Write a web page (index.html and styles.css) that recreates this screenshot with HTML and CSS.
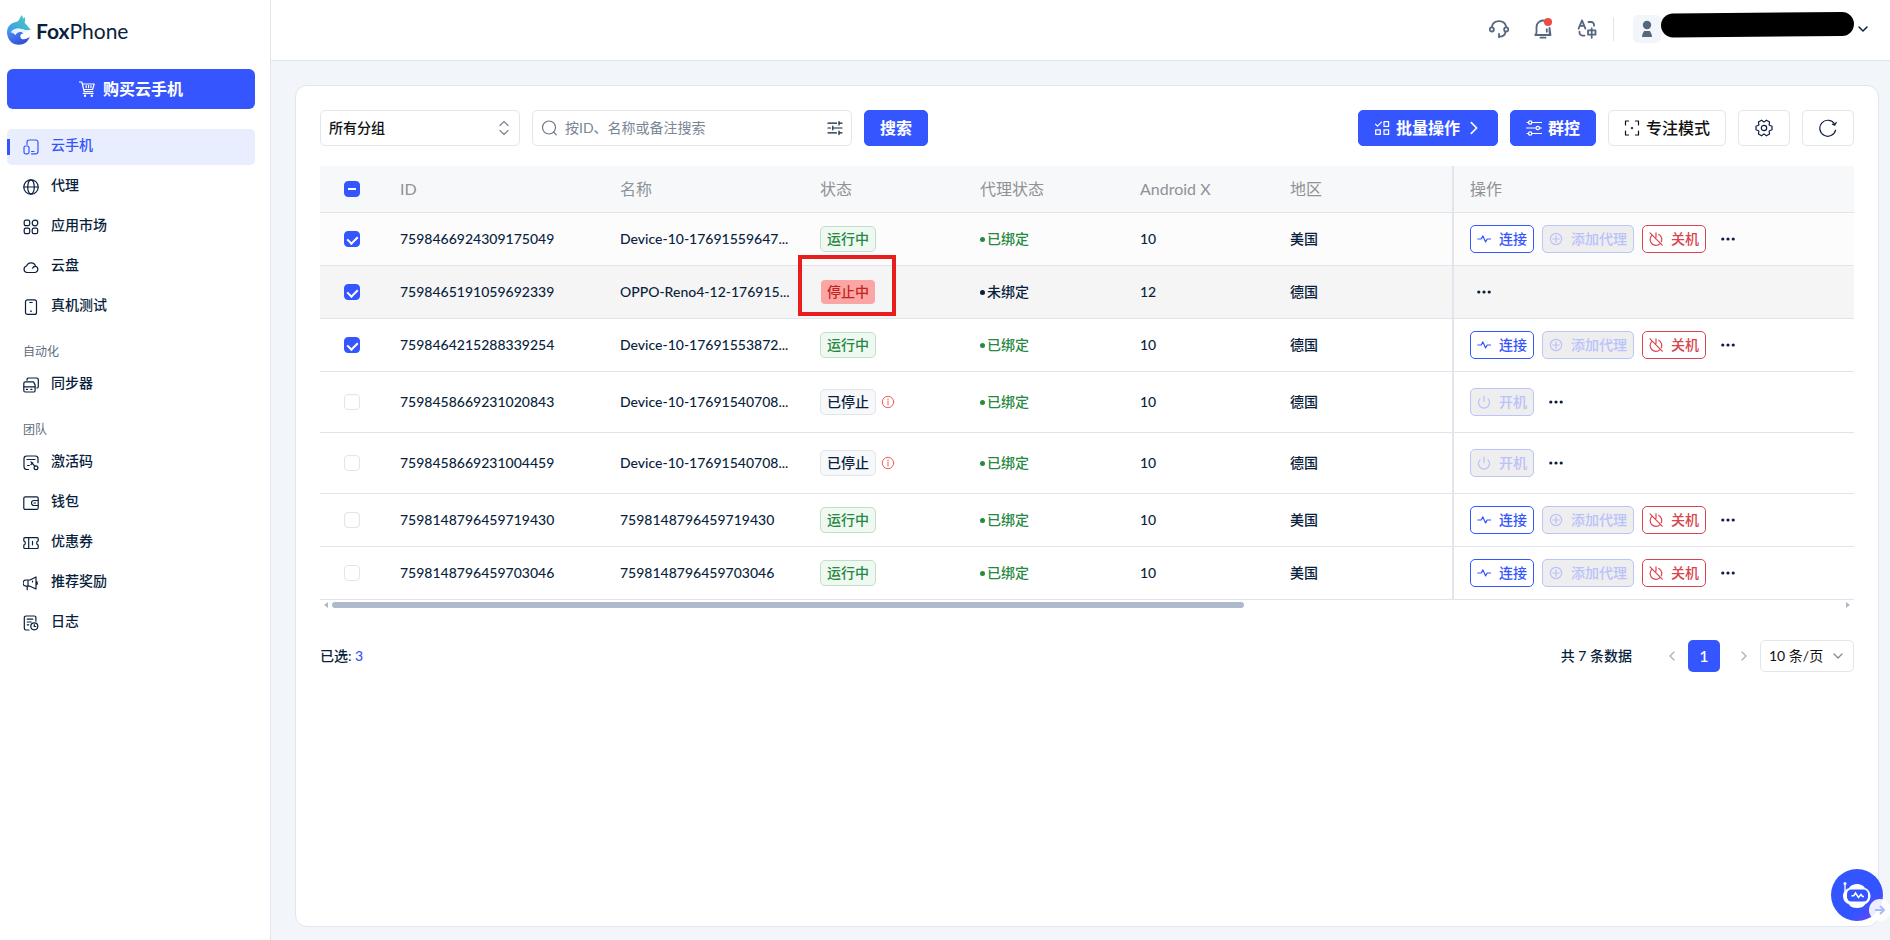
FILE: index.html
```html
<!DOCTYPE html>
<html lang="zh-CN">
<head>
    <meta charset="UTF-8">
    <meta name="viewport" content="width=device-width, initial-scale=1.0">
    <title>FoxPhone</title>
    <link rel="stylesheet" href="styles.css">
</head>
<body>
    <!-- Icon sprite -->
    <svg class="sprite" xmlns="http://www.w3.org/2000/svg">
        <symbol id="i-cart" viewBox="0 0 16 16"><path d="M.5 1h2.3l2.4 9.500h8.600M3.300 3h11.900l-1.600 5.500H4.800M4.200 12.300h10M7.200 4.500v2.200M9.600 4.500v2.200M12 4.500v2.200"/><circle cx="6" cy="14.700" r=".6"/><circle cx="12.800" cy="14.700" r=".6"/></symbol>
        <symbol id="i-phone" viewBox="0 0 16 16"><path d="M4 5.500V3.200A2.200 2.200 0 0 1 6.200 1h6.600A2.200 2.200 0 0 1 15 3.200v9.400a2.200 2.200 0 0 1-2.200 2.200H8.500M8.500 12.500H11"/><rect x="1" y="7" width="5" height="7.800" rx="1.500"/></symbol>
        <symbol id="i-globe" viewBox="0 0 16 16"><circle cx="8" cy="8" r="7.200"/><ellipse cx="8" cy="8" rx="3.300" ry="7.200"/><path d="M.8 8h14.400"/></symbol>
        <symbol id="i-apps" viewBox="0 0 16 16"><rect x="1.200" y="1.200" width="5.500" height="5.500" rx="1.600"/><circle cx="12" cy="4" r="2.800"/><rect x="1.200" y="9.200" width="5.500" height="5.500" rx="1.600"/><rect x="9.200" y="9.200" width="5.500" height="5.500" rx="1.600"/></symbol>
        <symbol id="i-cloud" viewBox="0 0 16 16"><path d="M4 13.500a3.300 3.300 0 0 1-.4-6.500A4.700 4.700 0 0 1 12.600 7.300a3.200 3.200 0 0 1-.4 6.200zM12.600 7.300c-1.300-.1-2.500.6-3 1.900"/></symbol>
        <symbol id="i-device" viewBox="0 0 16 16"><rect x="2.500" y=".8" width="11" height="14.600" rx="2"/><path d="M6.800 3.500h2.400M7.600 12.200h.8"/></symbol>
        <symbol id="i-sync" viewBox="0 0 16 16"><path d="M4 3.200V2.600A1.500 1.500 0 0 1 5.500 1h8a1.700 1.700 0 0 1 1.800 1.700v6.800a1.500 1.500 0 0 1-1.500 1.500M.9 9.800h11"/><path d="M2.300 4.900h8.200l1.600 3v5.600a1.500 1.500 0 0 1-1.500 1.500H2.300A1.500 1.500 0 0 1 .8 13.500V6.400a1.500 1.500 0 0 1 1.500-1.500zM3.300 12.300h1.200M7.800 12.300H9"/></symbol>
        <symbol id="i-code" viewBox="0 0 16 16"><path d="M5.500 14.500H3.700A2.700 2.700 0 0 1 1 11.800V3.700A2.700 2.700 0 0 1 3.700 1h8.600A2.700 2.700 0 0 1 15 3.700v4M4 4.500h8M4.500 10.500h1.800M8 6.800l4 4.600M8 9.500l1.800-1.700"/><circle cx="13" cy="12.700" r="1.900"/></symbol>
        <symbol id="i-wallet" viewBox="0 0 16 16"><rect x=".8" y="1.800" width="14.400" height="12.600" rx="1.500"/><path d="M15 5.500h-4a2.500 2.500 0 0 0 0 5h4M11 8h1.500"/></symbol>
        <symbol id="i-coupon" viewBox="0 0 16 16"><path d="M1.800 2.700h12.400a1 1 0 0 1 1 1v2.200a2.200 2.200 0 0 0 0 4.200v2.400a1 1 0 0 1-1 1H1.800a1 1 0 0 1-1-1v-2.400a2.200 2.200 0 0 0 0-4.200V3.700a1 1 0 0 1 1-1zM5.700 2.700v10.800M9.500 6.300v3.500"/></symbol>
        <symbol id="i-horn" viewBox="0 0 16 16"><path d="M5 5h2l6-3v12l-6-2.800H5M5 5H3.200a3.100 3.100 0 0 0 0 6.200H5zM13 6.400a1.800 1.800 0 0 1 0 3.500M4.200 11.500v3.200M9.500 6v1"/></symbol>
        <symbol id="i-log" viewBox="0 0 16 16"><path d="M6 15H3a1.700 1.700 0 0 1-1.700-1.700V2.700A1.700 1.700 0 0 1 3 1h8.200a1.700 1.700 0 0 1 1.700 1.700v3.500M4.200 4.200h5.600M4.200 7h4M4.200 9.800h1.600"/><circle cx="11.300" cy="11.300" r="3.500"/><path d="M11.300 9.500v2h1.500"/></symbol>
        <symbol id="i-headset" viewBox="0 0 20 20"><path d="M2.800 7.800a7.400 7.400 0 0 1 14.400 0M16.500 13c-.5 2.800-2.500 4.600-6 4.700M10 14.800v3.500"/><circle cx="2.800" cy="10.400" r="2.100"/><circle cx="17.200" cy="10.400" r="2.100"/></symbol>
        <symbol id="i-bell" viewBox="0 0 20 20"><path d="M2.300 16c1-.8 1.200-1.800 1.200-3V8a6.500 6.500 0 0 1 9.500-5.700M16.500 9v4c0 1.200.2 2.200 1 3zM2.300 16h15.200M7.500 18.700h5M13.800 10.200v2.600"/></symbol>
        <symbol id="i-lang" viewBox="0 0 20 20"><path d="M1.600 9.600 5 1.400l3.400 8.200M2.800 6.800h4.400M11.500 3h2.700A2.800 2.800 0 0 1 17 5.800v.9M2.500 12.600v1a3 3 0 0 0 3 3h2M11 11.400h7.500v4.300H11zM14.700 9.400v9.400"/></symbol>
        <symbol id="i-user" viewBox="0 0 16 20"><g fill="currentColor" stroke="none"><circle cx="8" cy="6" r="4.200"/><path d="M5.200 12h5.600c1.200 1.500 2.200 3.800 2.200 6H3c0-2.200 1-4.500 2.200-6z"/></g></symbol>
        <symbol id="i-down" viewBox="0 0 12 12"><path d="m2 4 4 4 4-4"/></symbol>
        <symbol id="i-left" viewBox="0 0 12 12"><path d="M8 2 4 6l4 4"/></symbol>
        <symbol id="i-right" viewBox="0 0 12 12"><path d="m4 2 4 4-4 4"/></symbol>
        <symbol id="i-updown" viewBox="0 0 12 16"><path d="m2 5.500 4-4 4 4M2 10.500l4 4 4-4"/></symbol>
        <symbol id="i-search" viewBox="0 0 16 16"><circle cx="8" cy="7.500" r="6.500"/><path d="m12.600 12 2.600 2.800"/></symbol>
        <symbol id="i-filter" viewBox="0 0 16 16"><path d="M1 3.200h8.500M12 1.500v3.400M12 3.200h3M1 8h2.500M5.800 6.200v3.600M5.800 8H15M1 12.800h8.500M12 11v3.600M12 12.800h3"/></symbol>
        <symbol id="i-batch" viewBox="0 0 16 16"><path d="m1.500 4.200 2 2 4-4"/><rect x="10" y="1.700" width="4.600" height="4.600"/><rect x="1.700" y="9.800" width="4.600" height="4.600"/><rect x="10" y="9.800" width="4.600" height="4.600"/></symbol>
        <symbol id="i-control" viewBox="0 0 16 16"><path d="M1 2.500h1.500M6 2.500h9.500M.5 8h9.300M13.600 8h2M1 13.500h1.500M6 13.500h9.500"/><circle cx="4.200" cy="2.500" r="1.700"/><circle cx="11.800" cy="8" r="1.700"/><circle cx="4.200" cy="13.500" r="1.700"/></symbol>
        <symbol id="i-focus" viewBox="0 0 16 16"><path d="M1.500 5V1h3M11.500 1h3v4M14.500 11v4h-3M4.500 15h-3v-4M7.300 8h1.400M8 7.300v1.400"/></symbol>
        <symbol id="i-gear" viewBox="0 0 18 18"><path d="M17 7.200v3.600l-2.900 1.200.5 3-3.200 1.800L9 14.900l-2.400 1.900L3.400 15l.5-3L1 10.800V7.200L3.900 6l-.5-3 3.200-1.800L9 3.100l2.400-1.900L14.600 3l-.5 3z"/><circle cx="9" cy="9" r="2.700"/></symbol>
        <symbol id="i-refresh" viewBox="0 0 18 18"><path d="M16.600 11.200A8 8 0 1 1 15.500 4.800M17.200 3.500l-1.500 2.700-2.300-1"/></symbol>
        <symbol id="i-connect" viewBox="0 0 14 14"><path d="M.8 7h3.400l1.700-3.100 2.700 6L10.200 7h3.500"/></symbol>
        <symbol id="i-plus" viewBox="0 0 14 14"><circle cx="7" cy="7" r="5.600"/><path d="M7 3.800v6.400M3.800 7h6.400"/></symbol>
        <symbol id="i-off" viewBox="0 0 14 14"><path d="M2.700 3.700a5.700 5.700 0 0 0 8.300 7.900M12.200 9.800a5.700 5.700 0 0 0-2.400-7.400M7 .8v4.500M1 .9l12.200 12.300"/></symbol>
        <symbol id="i-power" viewBox="0 0 14 14"><path d="M3 3.800a5.500 5.500 0 1 0 8 0M7 1v5.500"/></symbol>
        <symbol id="i-dots" viewBox="0 0 14 14"><g fill="currentColor" stroke="none"><circle cx="1.800" cy="7" r="1.600"/><circle cx="7" cy="7" r="1.600"/><circle cx="12.200" cy="7" r="1.600"/></g></symbol>
        <symbol id="i-info" viewBox="0 0 14 14"><circle cx="7" cy="7" r="5.700"/><path d="M7 6v4M7 3.800v1"/></symbol>
    </svg>

    <div class="layout">
        <!-- Sidebar -->
        <aside class="sidebar">
            <a class="logo" href="#">
                <svg class="logo-mark" viewBox="0 0 24 31" aria-hidden="true">
                    <defs>
                        <linearGradient id="head" x1="0" y1="1" x2="1" y2="0">
                            <stop offset="0" stop-color="#3c8df5"/>
                            <stop offset="1" stop-color="#49d3b7"/>
                        </linearGradient>
                        <linearGradient id="wave" x1="0" y1="0" x2="1" y2="1">
                            <stop offset="0" stop-color="#4d8ff7"/>
                            <stop offset="1" stop-color="#2b3fd0"/>
                        </linearGradient>
                    </defs>
                    <path d="M0 17.500C0 10.500 5 7.500 10.500 6.500 12.500 5 13 2.500 14.500.3c1.200 1 1.400 2.400 1.300 3.400L17.500 2c.9 2 .6 4 .2 5.700 1.900 2 3.600 4.700 6.300 6.800-4 1.300-7-.2-9.500-.6C9 13 4 14.500 2.500 22z" fill="url(#head)"/>
                    <path d="M3 19c2-5.500 8-6.500 12-4.800 3 1.300 5.500 1.300 9 .3-3 2.500-6.500 2.500-9.500 2.500z" fill="#e4f4fd"/>
                    <path d="M0 17.500C.5 25 5 29.800 12 29.800c5 0 9.200-3 10.800-8-3 2.800-8.300 3.500-9.300.6-.7-2.200 1-3.800 3-3.800-2.300-2.600-6.500-1.700-8 1.500C6 17.500 3.500 17 2.700 17.500 2 15.500.5 15.500 0 17.500z" fill="url(#wave)"/>
                </svg>
                <span class="logo-text"><b>Fox</b>Phone</span>
            </a>

            <button class="btn-buy" type="button"><svg class="icon"><use href="#i-cart"/></svg>购买云手机</button>

            <nav class="menu">
                <a class="menu-item active" href="#"><svg class="icon"><use href="#i-phone"/></svg><span>云手机</span></a>
                <a class="menu-item" href="#"><svg class="icon"><use href="#i-globe"/></svg><span>代理</span></a>
                <a class="menu-item" href="#"><svg class="icon"><use href="#i-apps"/></svg><span>应用市场</span></a>
                <a class="menu-item" href="#"><svg class="icon"><use href="#i-cloud"/></svg><span>云盘</span></a>
                <a class="menu-item" href="#"><svg class="icon"><use href="#i-device"/></svg><span>真机测试</span></a>
                <div class="menu-label">自动化</div>
                <a class="menu-item" href="#"><svg class="icon"><use href="#i-sync"/></svg><span>同步器</span></a>
                <div class="menu-label">团队</div>
                <a class="menu-item" href="#"><svg class="icon"><use href="#i-code"/></svg><span>激活码</span></a>
                <a class="menu-item" href="#"><svg class="icon"><use href="#i-wallet"/></svg><span>钱包</span></a>
                <a class="menu-item" href="#"><svg class="icon"><use href="#i-coupon"/></svg><span>优惠券</span></a>
                <a class="menu-item" href="#"><svg class="icon"><use href="#i-horn"/></svg><span>推荐奖励</span></a>
                <a class="menu-item" href="#"><svg class="icon"><use href="#i-log"/></svg><span>日志</span></a>
            </nav>
        </aside>

        <div class="page">
            <!-- Top bar -->
            <header class="topbar">
                <button class="top-icon" type="button" aria-label="客服"><svg class="icon"><use href="#i-headset"/></svg></button>
                <button class="top-icon" type="button" aria-label="通知"><svg class="icon"><use href="#i-bell"/></svg><span class="dot"></span></button>
                <button class="top-icon" type="button" aria-label="语言"><svg class="icon"><use href="#i-lang"/></svg></button>
                <span class="divider"></span>
                <button class="account" type="button" aria-label="账户">
                    <span class="avatar"><svg class="icon"><use href="#i-user"/></svg></span>
                    <svg class="account-mask" viewBox="0 0 194 26" preserveAspectRatio="none" aria-hidden="true"><path d="M12 13.500 181 12" stroke="#000" stroke-width="24" stroke-linecap="round"/></svg>
                    <svg class="icon account-arrow"><use href="#i-down"/></svg>
                </button>
            </header>

            <main class="content">
                <section class="card">
                    <div class="toolbar">
                        <div class="select-box group-select">
                            <select aria-label="分组">
                                <option>所有分组</option>
                            </select>
                            <svg class="icon select-arrow"><use href="#i-updown"/></svg>
                        </div>
                        <div class="search-box">
                            <svg class="icon search-icon"><use href="#i-search"/></svg>
                            <input type="text" placeholder="按ID、名称或备注搜索" aria-label="搜索">
                            <button class="filter-btn" type="button" aria-label="筛选"><svg class="icon"><use href="#i-filter"/></svg></button>
                        </div>
                        <button class="btn primary" type="button">搜索</button>
                        <div class="toolbar-right">
                            <button class="btn primary" type="button"><svg class="icon"><use href="#i-batch"/></svg>批量操作<svg class="icon"><use href="#i-right"/></svg></button>
                            <button class="btn primary" type="button"><svg class="icon"><use href="#i-control"/></svg>群控</button>
                            <button class="btn" type="button"><svg class="icon"><use href="#i-focus"/></svg>专注模式</button>
                            <button class="btn icon-only" type="button" aria-label="设置"><svg class="icon"><use href="#i-gear"/></svg></button>
                            <button class="btn icon-only" type="button" aria-label="刷新"><svg class="icon"><use href="#i-refresh"/></svg></button>
                        </div>
                    </div>

                    <table class="devices">
                        <colgroup>
                            <col class="col-check"><col class="col-id"><col class="col-name"><col class="col-state"><col class="col-proxy"><col class="col-android"><col><col class="col-actions">
                        </colgroup>
                        <thead>
                            <tr>
                                <th class="check"><input class="partial" type="checkbox" aria-label="全选"></th>
                                <th>ID</th>
                                <th>名称</th>
                                <th>状态</th>
                                <th>代理状态</th>
                                <th>Android X</th>
                                <th>地区</th>
                                <th class="fixed">操作</th>
                            </tr>
                        </thead>
                        <tbody>
                            <tr class="row-selected">
                                <td class="check"><input type="checkbox" aria-label="选择" checked></td>
                                <td>7598466924309175049</td>
                                <td>Device-10-17691559647...</td>
                                <td><span class="tag running">运行中</span></td>
                                <td><span class="proxy bound">已绑定</span></td>
                                <td>10</td>
                                <td>美国</td>
                                <td class="fixed">
                                    <div class="actions">
                                        <button class="act connect" type="button"><svg class="icon"><use href="#i-connect"/></svg>连接</button>
                                        <button class="act" type="button" disabled><svg class="icon"><use href="#i-plus"/></svg>添加代理</button>
                                        <button class="act danger" type="button"><svg class="icon"><use href="#i-off"/></svg>关机</button>
                                        <button class="more" type="button" aria-label="更多"><svg class="icon"><use href="#i-dots"/></svg></button>
                                    </div>
                                </td>
                            </tr>
                            <tr class="row-hover">
                                <td class="check"><input type="checkbox" aria-label="选择" checked></td>
                                <td>7598465191059692339</td>
                                <td>OPPO-Reno4-12-176915...</td>
                                <td class="marked"><span class="tag stopping">停止中</span><span class="mark-box"></span></td>
                                <td><span class="proxy">未绑定</span></td>
                                <td>12</td>
                                <td>德国</td>
                                <td class="fixed">
                                    <div class="actions">
                                        <button class="more" type="button" aria-label="更多"><svg class="icon"><use href="#i-dots"/></svg></button>
                                    </div>
                                </td>
                            </tr>
                            <tr>
                                <td class="check"><input type="checkbox" aria-label="选择" checked></td>
                                <td>7598464215288339254</td>
                                <td>Device-10-17691553872...</td>
                                <td><span class="tag running">运行中</span></td>
                                <td><span class="proxy bound">已绑定</span></td>
                                <td>10</td>
                                <td>德国</td>
                                <td class="fixed">
                                    <div class="actions">
                                        <button class="act connect" type="button"><svg class="icon"><use href="#i-connect"/></svg>连接</button>
                                        <button class="act" type="button" disabled><svg class="icon"><use href="#i-plus"/></svg>添加代理</button>
                                        <button class="act danger" type="button"><svg class="icon"><use href="#i-off"/></svg>关机</button>
                                        <button class="more" type="button" aria-label="更多"><svg class="icon"><use href="#i-dots"/></svg></button>
                                    </div>
                                </td>
                            </tr>
                            <tr class="row-tall">
                                <td class="check"><input type="checkbox" aria-label="选择"></td>
                                <td>7598458669231020843</td>
                                <td>Device-10-17691540708...</td>
                                <td><div class="state"><span class="tag">已停止</span><svg class="icon info"><use href="#i-info"/></svg></div></td>
                                <td><span class="proxy bound">已绑定</span></td>
                                <td>10</td>
                                <td>德国</td>
                                <td class="fixed">
                                    <div class="actions">
                                        <button class="act" type="button" disabled><svg class="icon"><use href="#i-power"/></svg>开机</button>
                                        <button class="more" type="button" aria-label="更多"><svg class="icon"><use href="#i-dots"/></svg></button>
                                    </div>
                                </td>
                            </tr>
                            <tr class="row-tall">
                                <td class="check"><input type="checkbox" aria-label="选择"></td>
                                <td>7598458669231004459</td>
                                <td>Device-10-17691540708...</td>
                                <td><div class="state"><span class="tag">已停止</span><svg class="icon info"><use href="#i-info"/></svg></div></td>
                                <td><span class="proxy bound">已绑定</span></td>
                                <td>10</td>
                                <td>德国</td>
                                <td class="fixed">
                                    <div class="actions">
                                        <button class="act" type="button" disabled><svg class="icon"><use href="#i-power"/></svg>开机</button>
                                        <button class="more" type="button" aria-label="更多"><svg class="icon"><use href="#i-dots"/></svg></button>
                                    </div>
                                </td>
                            </tr>
                            <tr>
                                <td class="check"><input type="checkbox" aria-label="选择"></td>
                                <td>7598148796459719430</td>
                                <td>7598148796459719430</td>
                                <td><span class="tag running">运行中</span></td>
                                <td><span class="proxy bound">已绑定</span></td>
                                <td>10</td>
                                <td>美国</td>
                                <td class="fixed">
                                    <div class="actions">
                                        <button class="act connect" type="button"><svg class="icon"><use href="#i-connect"/></svg>连接</button>
                                        <button class="act" type="button" disabled><svg class="icon"><use href="#i-plus"/></svg>添加代理</button>
                                        <button class="act danger" type="button"><svg class="icon"><use href="#i-off"/></svg>关机</button>
                                        <button class="more" type="button" aria-label="更多"><svg class="icon"><use href="#i-dots"/></svg></button>
                                    </div>
                                </td>
                            </tr>
                            <tr>
                                <td class="check"><input type="checkbox" aria-label="选择"></td>
                                <td>7598148796459703046</td>
                                <td>7598148796459703046</td>
                                <td><span class="tag running">运行中</span></td>
                                <td><span class="proxy bound">已绑定</span></td>
                                <td>10</td>
                                <td>美国</td>
                                <td class="fixed">
                                    <div class="actions">
                                        <button class="act connect" type="button"><svg class="icon"><use href="#i-connect"/></svg>连接</button>
                                        <button class="act" type="button" disabled><svg class="icon"><use href="#i-plus"/></svg>添加代理</button>
                                        <button class="act danger" type="button"><svg class="icon"><use href="#i-off"/></svg>关机</button>
                                        <button class="more" type="button" aria-label="更多"><svg class="icon"><use href="#i-dots"/></svg></button>
                                    </div>
                                </td>
                            </tr>
                        </tbody>
                    </table>
                    <div class="scrollbar">
                        <span class="scroll-left"></span>
                        <span class="scroll-thumb"></span>
                        <span class="scroll-right"></span>
                    </div>

                    <div class="table-footer">
                        <div class="selected">已选: <span>3</span></div>
                        <div class="pagination">
                            <span class="total">共 7 条数据</span>
                            <button class="page-arrow" type="button" aria-label="上一页" disabled><svg class="icon"><use href="#i-left"/></svg></button>
                            <button class="page-number" type="button">1</button>
                            <button class="page-arrow" type="button" aria-label="下一页" disabled><svg class="icon"><use href="#i-right"/></svg></button>
                            <div class="select-box page-size">
                                <select aria-label="每页条数">
                                    <option>10 条/页</option>
                                </select>
                                <svg class="icon select-arrow"><use href="#i-down"/></svg>
                            </div>
                        </div>
                    </div>
                </section>
            </main>
        </div>
    </div>

    <!-- Floating assistant -->
    <button class="bot" type="button" aria-label="在线助手">
        <svg class="bot-face" viewBox="0 0 52 52" aria-hidden="true">
            <path d="M14 14v12" stroke="#b9c8ff" stroke-width="2"/>
            <circle cx="14" cy="14.500" r="1.500" fill="#fff"/>
            <path d="M18 19c2-3 5-4 8-4s6 1 8 4c3 1 5.500 4 5.500 8s-2.500 7-5 8c-2 3-5 4-8.500 4s-6.500-1-8.500-4c-3-1-5.500-4-5.500-8s3-7 6-8z" fill="#fff"/>
            <rect x="16" y="20.500" width="21" height="12" rx="4.500" fill="#3355ff"/>
            <path d="m20.500 27 2.500-.5 1.500-2.500 3 4.500 2.500-3 1.500 2h1.500" fill="none" stroke="#fff" stroke-width="1.500"/>
        </svg>
    </button>
    <button class="bot-hide" type="button" aria-label="收起">
        <svg viewBox="0 0 12 12" aria-hidden="true"><path d="M1 6h9M6 2l4 4-4 4"/></svg>
    </button>
</body>
</html>
```
FILE: styles.css
```css
* {
    box-sizing: border-box;
}

body {
    margin: 0;
    font-family: Lato, "Noto Sans CJK SC", sans-serif;
    font-size: 14px;
    line-height: 22px;
    color: #0a1f3d;
    background: #f2f5fa;
    overflow: hidden;
}

button, input, select {
    font-family: inherit;
    font-size: inherit;
    line-height: inherit;
    color: inherit;
    margin: 0;
    padding: 0;
    border: none;
    background: none;
}

button {
    cursor: pointer;
}

a {
    color: inherit;
    text-decoration: none;
}

.sprite {
    position: absolute;
    width: 0;
    height: 0;
}

.icon {
    flex: none;
    width: 16px;
    height: 16px;
    fill: none;
    stroke: currentColor;
    stroke-width: 1.2;
    stroke-linecap: round;
    stroke-linejoin: round;
}

.layout {
    display: flex;
    min-height: 100vh;
}

/* Sidebar */
.sidebar {
    flex: none;
    width: 271px;
    padding: 0 15px 0 7px;
    background: #fff;
    border-right: 1px solid #e1e5ec;
}

.logo {
    display: flex;
    align-items: center;
    gap: 5px;
    height: 69px;
    padding-bottom: 9px;
}

.logo-mark {
    width: 24px;
    height: 31px;
}

.logo-text {
    padding-top: 2px;
    font-size: 21px;
    line-height: 24px;
}

.btn-buy {
    display: flex;
    justify-content: center;
    align-items: center;
    gap: 8px;
    width: 100%;
    height: 40px;
    margin-bottom: 20px;
    font-size: 16px;
    font-weight: 700;
    color: #fff;
    background: #3556ff;
    border-radius: 6px;
}

.menu {
    display: flex;
    flex-direction: column;
    gap: 4px;
}

.menu-item {
    position: relative;
    display: flex;
    align-items: center;
    gap: 12px;
    height: 36px;
    padding: 0 16px;
    font-weight: 500;
    border-radius: 5px;
}

.menu-item span {
    padding-bottom: 4px;
}

.menu-item.active {
    color: #3556ff;
    background: #e8eefd;
}

.menu-item.active::before {
    content: "";
    position: absolute;
    left: 0;
    top: 10px;
    width: 3px;
    height: 16px;
    background: #3556ff;
}

.menu-label {
    margin-top: 12px;
    padding: 0 16px;
    font-size: 12px;
    color: #5d6b80;
}

/* Top bar */
.page {
    flex: 1;
    min-width: 0;
    display: flex;
    flex-direction: column;
}

.topbar {
    display: flex;
    justify-content: flex-end;
    align-items: center;
    height: 61px;
    padding-right: 21px;
    padding-bottom: 2px;
    color: #56667e;
    background: #fff;
    border-bottom: 1px solid #e1e5ec;
}

.top-icon {
    position: relative;
    display: flex;
    justify-content: center;
    width: 44px;
}

.top-icon .icon {
    width: 20px;
    height: 20px;
    stroke-width: 1.8;
}

.dot {
    position: absolute;
    right: 13px;
    top: -1px;
    width: 8px;
    height: 8px;
    border-radius: 50%;
    background: #ec4b45;
}

.divider {
    width: 1px;
    height: 24px;
    margin: 0 19px 0 4px;
    background: #dfe3ea;
}

.account {
    display: flex;
    align-items: center;
}

.avatar {
    display: flex;
    justify-content: center;
    align-items: center;
    width: 28px;
    height: 28px;
    color: #56667e;
    background: #f2f5fa;
    border-radius: 5px;
}

.avatar .icon {
    height: 20px;
}

.account-mask {
    width: 194px;
    height: 26px;
    margin-bottom: 8px;
}

.account-arrow {
    width: 12px;
    height: 12px;
    margin-left: 2px;
    color: #0a1f3d;
    stroke-width: 1.5;
}

/* Card */
.content {
    flex: 1;
    display: flex;
    padding: 24px 11px 13px 24px;
}

.card {
    flex: 1;
    min-width: 0;
    padding: 24px;
    background: #fff;
    border: 1px solid #e1e5ec;
    border-radius: 12px;
}

.toolbar {
    display: flex;
    gap: 12px;
    margin-bottom: 20px;
}

.toolbar-right {
    display: flex;
    gap: 12px;
    margin-left: auto;
}

.select-box {
    position: relative;
}

.select-box select {
    appearance: none;
    width: 100%;
    height: 100%;
    padding: 0 8px;
    color: #111;
    background: #fff;
    border: 1px solid #e1e5ec;
    border-radius: 5px;
}

.select-arrow {
    position: absolute;
    right: 10px;
    top: 10px;
    width: 12px;
    color: #7c8896;
    pointer-events: none;
}

.group-select {
    width: 200px;
    height: 36px;
}

.group-select select {
    font-weight: 500;
}

.search-box {
    display: flex;
    align-items: center;
    gap: 8px;
    width: 320px;
    height: 36px;
    padding: 0 8px;
    border: 1px solid #e1e5ec;
    border-radius: 5px;
}

.search-box input {
    flex: 1;
    min-width: 0;
    outline: none;
}

.search-box input::placeholder {
    color: #7a8596;
}

.search-icon {
    color: #6b7686;
}

.filter-btn {
    display: flex;
}

.btn {
    display: flex;
    justify-content: center;
    align-items: center;
    gap: 6px;
    height: 36px;
    padding: 0 15px;
    font-size: 16px;
    font-weight: 500;
    color: #111;
    background: #fff;
    border: 1px solid #e1e5ec;
    border-radius: 5px;
    white-space: nowrap;
}

.btn.primary {
    font-weight: 700;
    color: #fff;
    background: #3556ff;
    border-color: #3556ff;
}

.btn.icon-only {
    width: 52px;
    color: #0a1f3d;
}

.btn.icon-only .icon {
    width: 18px;
    height: 18px;
}

/* Device table */
.devices {
    width: 100%;
    table-layout: fixed;
    border-collapse: separate;
    border-spacing: 0;
}

.col-check { width: 64px; }
.col-id { width: 220px; }
.col-name { width: 200px; }
.col-state { width: 160px; }
.col-proxy { width: 160px; }
.col-android { width: 150px; }
.col-actions { width: 402px; }

.devices th,
.devices td {
    padding: 0 16px;
    text-align: left;
    white-space: nowrap;
    border-bottom: 1px solid #e1e4ea;
}

.devices th {
    height: 47px;
    font-size: 16px;
    font-weight: 400;
    color: #8f9296;
    background: #f7f8fa;
}

.devices td {
    height: 53px;
    font-weight: 500;
}

.devices .row-tall td {
    height: 61px;
}

.devices .row-selected td {
    background: #fcfcfc;
}

.devices .row-hover td {
    background: #f5f5f5;
}

.devices .fixed {
    border-left: 2px solid #e1e5ec;
}

.devices .check {
    padding: 0;
    text-align: center;
}

.check input {
    appearance: none;
    display: block;
    width: 16px;
    height: 16px;
    margin: 0 auto;
    background: #fff;
    border: 1px solid #e1e4ea;
    border-radius: 4px;
}

.check input:checked,
.check input.partial {
    position: relative;
    background: #3556ff;
    border-color: #3556ff;
}

.check input:checked::after {
    content: "";
    position: absolute;
    left: 4px;
    top: 2px;
    width: 5px;
    height: 8px;
    border: solid #fff;
    border-width: 0 2px 2px 0;
    transform: rotate(45deg);
}

.check input.partial::after {
    content: "";
    position: absolute;
    left: 3px;
    top: 6px;
    width: 8px;
    height: 2px;
    background: #fff;
}

.tag {
    display: inline-block;
    height: 26px;
    padding: 0 6px;
    line-height: 24px;
    vertical-align: middle;
    color: #0a1f3d;
    background: #f7f8fa;
    border: 1px solid #e1e4ea;
    border-radius: 5px;
}

.tag.running {
    color: #26893f;
    background: #eff8f1;
    border-color: #bfe0c8;
}

.tag.stopping {
    color: #c3241f;
    background: #fba5a4;
    background-clip: padding-box;
    border-color: transparent;
}

.state {
    display: flex;
    align-items: center;
    gap: 5px;
}

.info {
    width: 14px;
    height: 14px;
    color: #e8605d;
    stroke-width: 1;
}

.marked {
    position: relative;
}

/* Highlight frame round the stopping status */
.mark-box {
    position: absolute;
    left: -6px;
    top: -11px;
    width: 98px;
    height: 61px;
    border: 4px solid #e81d1d;
}

.proxy {
    display: flex;
    align-items: center;
    gap: 2px;
}

.proxy::before {
    content: "";
    width: 5px;
    height: 5px;
    border-radius: 50%;
    background: currentColor;
}

.proxy.bound {
    color: #26893f;
}

.actions {
    display: flex;
    gap: 8px;
}

.act {
    display: flex;
    align-items: center;
    gap: 8px;
    height: 28px;
    padding: 0 6px;
    font-weight: 500;
    color: #b9c2fb;
    background: #eee;
    border: 1px solid #b9c5fb;
    border-radius: 5px;
    cursor: default;
}

.act .icon,
.more .icon {
    width: 14px;
    height: 14px;
}

.act.connect {
    color: #3556ff;
    background: #fff;
    border-color: #3556ff;
    cursor: pointer;
}

.act.danger {
    color: #d8454f;
    background: #fff;
    border-color: #d8454f;
    cursor: pointer;
}

.more {
    display: flex;
    justify-content: center;
    align-items: center;
    width: 28px;
    height: 28px;
}

/* Horizontal scrollbar */
.scrollbar {
    display: grid;
    grid-template-columns: 8px 23fr 15fr 8px;
    column-gap: 4px;
    align-items: center;
    height: 10px;
}

.scroll-left,
.scroll-right {
    justify-self: end;
    border: solid transparent;
    border-width: 3px 4px;
}

.scroll-left {
    border-left-width: 0;
    border-right-color: #aebac9;
}

.scroll-right {
    grid-column: 4;
    justify-self: start;
    border-right-width: 0;
    border-left-color: #aebac9;
}

.scroll-thumb {
    height: 6px;
    border-radius: 3px;
    background: #aebac9;
}

/* Footer */
.table-footer {
    display: flex;
    justify-content: space-between;
    align-items: center;
    margin-top: 30px;
    font-weight: 500;
}

.selected span {
    color: #3556ff;
}

.pagination {
    display: flex;
    align-items: center;
}

.total {
    margin-right: 24px;
}

.page-arrow {
    display: flex;
    justify-content: center;
    align-items: center;
    width: 32px;
    height: 32px;
    color: #a9aeb6;
}

.page-arrow .icon {
    width: 12px;
    height: 12px;
}

.page-number {
    width: 32px;
    height: 32px;
    margin-right: 8px;
    font-size: 16px;
    font-weight: 500;
    color: #fff;
    background: #3556ff;
    border-radius: 5px;
}

.page-size {
    width: 94px;
    height: 32px;
}

.page-size .select-arrow {
    top: 8px;
}

/* Floating assistant */
.bot {
    position: fixed;
    right: 7px;
    bottom: 19px;
    width: 52px;
    height: 52px;
    border-radius: 50%;
    background: linear-gradient(135deg, #3355ff 65%, #7a3cff);
}

.bot-face {
    display: block;
    width: 52px;
    height: 52px;
}

.bot-hide {
    position: fixed;
    right: -1px;
    bottom: 19px;
    display: flex;
    justify-content: center;
    align-items: center;
    width: 22px;
    height: 22px;
    border-radius: 50%;
    background: rgba(255, 255, 255, 0.9);
}

.bot-hide svg {
    width: 12px;
    height: 12px;
    fill: none;
    stroke: #a9b8ff;
    stroke-width: 2;
}
```
